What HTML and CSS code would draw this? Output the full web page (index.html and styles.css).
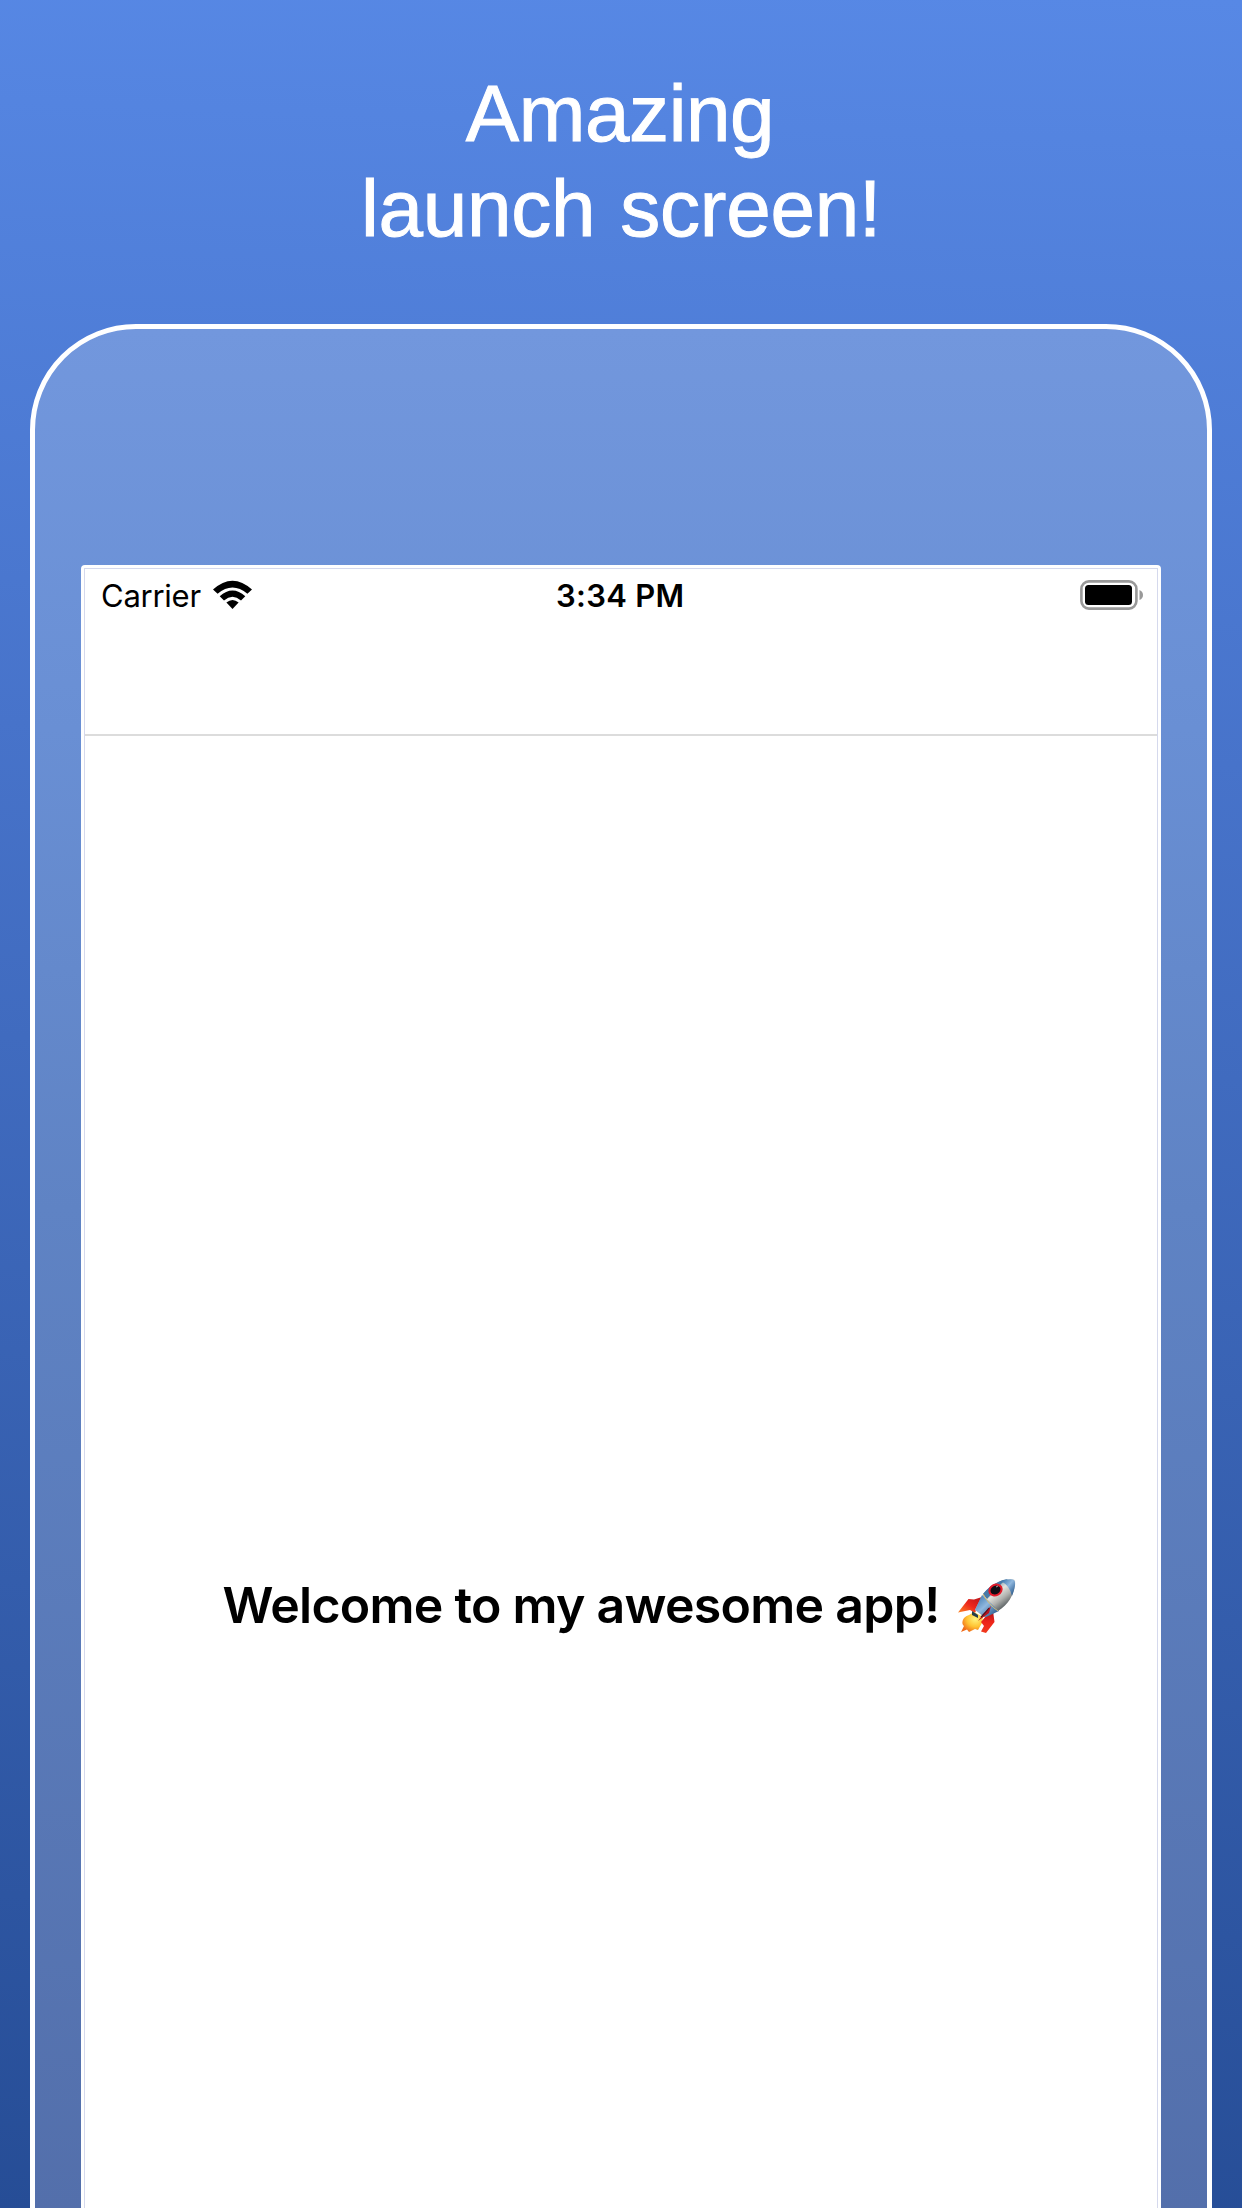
FILE: index.html
```html
<!DOCTYPE html>
<html lang="en">
<head>
<meta charset="utf-8">
<title>Amazing launch screen!</title>
<link rel="stylesheet" href="styles.css">
</head>
<body>
<main class="poster">
  <h1 class="headline"><span class="headline-top">Amazing</span><br>launch screen!</h1>
  <section class="device">
    <div class="screen">
      <div class="display">
        <header class="navbar">
          <div class="status">
            <div class="network">
              <span class="carrier">Carrier</span>
              <svg class="wifi" viewBox="0 0 39 30">
                <path d="M0 9.5Q19.5-8.2 39 9.5L34.4 13.8Q19.5 1 4.6 13.8Z"/>
                <path d="M6.7 16.2Q19.5 5 32.3 16.2L28 20.4Q19.5 13.2 11 20.4Z"/>
                <path d="M13.4 22.5Q19.5 17.5 25.6 22.5L19.5 29Z"/>
              </svg>
            </div>
            <span class="time">3:34 PM</span>
            <svg class="battery" viewBox="0 0 64 30">
              <rect x="1.4" y="1.4" width="55" height="27.2" rx="7.5" fill="none" stroke="#999" stroke-width="2.6"/>
              <rect x="5" y="5" width="47" height="20" rx="3.5"/>
              <path d="M59.5 10Q63 11.5 63 15T59.5 20Z" fill="#999"/>
            </svg>
          </div>
        </header>
        <div class="content">
          <p class="welcome">Welcome to my awesome app!</p>
          <svg class="rocket" viewBox="0 0 58 54">
            <defs>
              <linearGradient id="hull" x1=".25" y1=".2" x2=".75" y2=".85">
                <stop offset="0" stop-color="#69899e"/><stop offset=".35" stop-color="#e4e4df"/><stop offset=".65" stop-color="#b0b1ae"/><stop offset="1" stop-color="#4e5558"/>
              </linearGradient>
              <linearGradient id="blue" x1=".1" y1=".1" x2=".9" y2=".9">
                <stop offset="0" stop-color="#457db2"/><stop offset=".45" stop-color="#90b8df"/><stop offset="1" stop-color="#28588b"/>
              </linearGradient>
              <linearGradient id="fin" x1="1" y1="0" x2="0" y2="1">
                <stop offset="0" stop-color="#b5141a"/><stop offset=".5" stop-color="#ed271d"/><stop offset="1" stop-color="#ff8a24"/>
              </linearGradient>
              <linearGradient id="lower-fin" x1="0" y1="0" x2="0" y2="1">
                <stop offset="0" stop-color="#a8141d"/><stop offset=".5" stop-color="#ee2419"/><stop offset="1" stop-color="#f03a1e"/>
              </linearGradient>
              <radialGradient id="flame" cx=".65" cy=".35" r=".7">
                <stop offset="0" stop-color="#fff47d"/><stop offset=".55" stop-color="#ffc332"/><stop offset="1" stop-color="#f06a18"/>
              </radialGradient>
            </defs>
            <path d="M0 33.5L10.5 20 16 20.5 24 18 17 34 12 31Z" fill="url(#fin)"/>
            <path d="M11 36C4 38 3 45 6 47L3 53 9 50.5 11 53 17 50 20 51 24 44 25 38 16 33Z" fill="url(#flame)"/>
            <path d="M35 32L36.5 43 28 54 23 52.5 26 47 23 43 28 37Z" fill="url(#lower-fin)"/>
            <path d="M24 17L35 7 40 13 40 25 36 34 26 38 17 31Z" fill="url(#hull)"/>
            <path d="M24 16L41 32 28 38 17 31Z" fill="url(#blue)"/>
            <path d="M25 15C34 4 46 0 54 0Q58 0 57 5C56 16 50 26 40 32Z" fill="url(#hull)"/>
            <path d="M25 15C33 5 43 1 50 0L44 4 29 20Z" fill="#477aa8"/>
            <path d="M43 2Q53-1 56 1 59 4 54 17 52 7 43 2Z" fill="url(#blue)"/>
            <path d="M25 15Q31 26 40 32" fill="none" stroke="#d9bd70" stroke-width="1"/>
            <ellipse cx="37.5" cy="11" rx="7.4" ry="6.2" transform="rotate(-28 37.5 11)" fill="#e31c2b"/>
            <ellipse cx="37.5" cy="11" rx="5.2" ry="4.2" transform="rotate(-28 37.5 11)" fill="#100d14"/>
            <path d="M38 8L40 7" stroke="#a0a3a7" stroke-width="1"/>
            <path d="M14 32L20 36 20 39 14 36Z" fill="#263e4b"/>
            <path d="M33 27L31 34 20 42 26 34Z" fill="#b6131f"/>
            <path d="M31 29Q28 33 23 38" fill="none" stroke="#471420" stroke-width="1.2"/>
          </svg>
        </div>
      </div>
    </div>
  </section>
</main>
</body>
</html>
```
FILE: styles.css
```css
* { box-sizing: border-box; }
body { margin: 0; }
.poster {
  display: flex;
  flex-direction: column;
  align-items: center;
  height: 2208px;
  overflow: hidden;
  padding-top: 66px;
  background: linear-gradient(182deg, #5788e5 0%, #4773ca 34%, #264d96 100%);
}
.headline {
  flex: none;
  height: 258px;
  margin: 0;
  color: #fff;
  font: 400 80px/95px "Liberation Sans", Arial, sans-serif;
  letter-spacing: -0.25px;
  word-spacing: 3px;
  text-align: center;
  white-space: nowrap;
  -webkit-text-stroke: 1px #fff;
}
.headline-top { padding-right: 2px; letter-spacing: -0.4px; }
.device {
  flex: none;
  width: 1182px;
  height: 2100px;
  padding: 236px 46px 0;
  border: 5px solid #fff;
  border-radius: 106px;
  background: linear-gradient(#7297dd 0, #698fd4 400px, #5f83c4 880px, #536fab 1880px);
}
.screen {
  width: 1080px;
  height: 1900px;
  padding: 3px;
  border-radius: 4px;
  background: #fff;
}
.display {
  display: flex;
  flex-direction: column;
  height: 100%;
  border: 1px solid #d5d9ed;
}
.navbar {
  height: 167px;
  border-bottom: 2px solid #dcdcdc;
}
.status {
  display: grid;
  grid-template-columns: 455px 1fr auto;
  align-items: center;
  height: 52px;
  padding: 0 13px 0 16px;
  font: 400 31px/50px Inter, sans-serif;
}
.network { display: flex; align-items: center; gap: 12px; }
.carrier { width: 100px; padding-top: 2px; letter-spacing: -0.25px; white-space: nowrap; }
.wifi { width: 39px; height: 30px; margin-top: -1px; }
.time { padding-top: 2px; font-weight: 560; letter-spacing: 0.3px; white-space: nowrap; }
.battery { width: 64px; height: 30px; justify-self: end; }
.content {
  display: flex;
  justify-content: center;
  align-items: flex-start;
  gap: 18px;
  padding: 839px 4px 0 0;
}
.welcome {
  margin: 0;
  font: 600 50px/60px Inter, sans-serif;
  letter-spacing: -0.73px;
  white-space: nowrap;
}
.rocket { flex: none; width: 58px; height: 54px; margin-top: 4px; }
```
